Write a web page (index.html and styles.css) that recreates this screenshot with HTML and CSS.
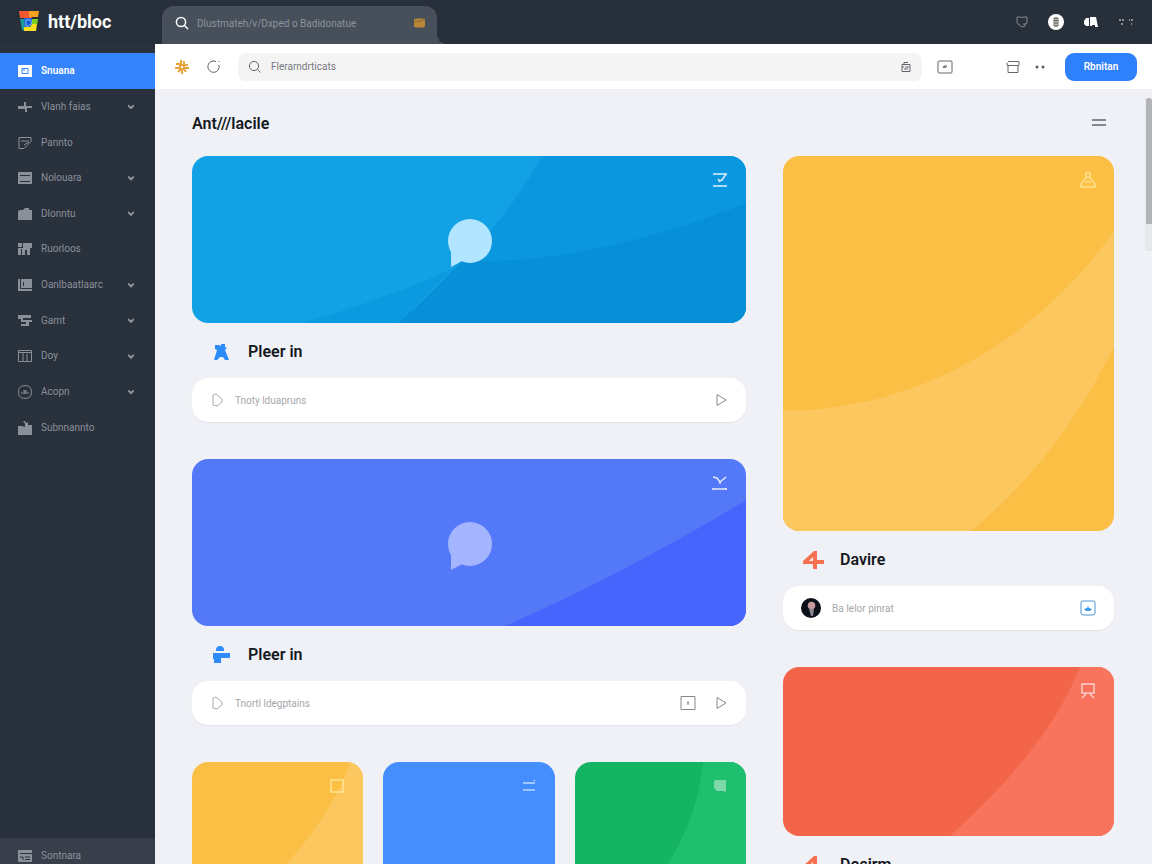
FILE: index.html
```html
<!DOCTYPE html>
<html lang="en">
<head>
<meta charset="utf-8">
<meta name="viewport" content="width=device-width, initial-scale=1">
<title>htt/bloc</title>
<link rel="stylesheet" href="styles.css">
</head>
<body>
<div class="app">
  <header class="topbar">
    <a class="brand" href="#">
      <svg class="logo" viewBox="0 0 22 22" aria-hidden="true">
        <path d="M1 1h13v7H2z" fill="#f4582e"/><path d="M11 1h10l-1 6h-9z" fill="#f9a01f"/>
        <path d="M2 9h5v12l-3-1z" fill="#1c9a93"/><path d="M6 8h8v8l-7 5z" fill="#1f62d8"/>
        <path d="M14 9h6l-1 6h-5z" fill="#7ed321"/><path d="M6 17h6l2-3h5l-1 7H6z" fill="#fbe11d"/>
        <path d="M8 10h4l2 3-4 3H8z" fill="#1557c9" stroke="#7fb9ff"/>
      </svg>
      <span>htt/bloc</span>
    </a>
    <label class="tab">
      <svg class="i14" viewBox="0 0 14 14" aria-hidden="true"><circle cx="6" cy="6" r="4.6"/><path d="M9.5 9.5l3.5 3.5"/></svg>
      <input type="search" aria-label="Search everything" placeholder="Dlustmateh/v/Dxped o Badidonatue">
      <svg class="folder" viewBox="0 0 12 10" aria-hidden="true"><rect width="12" height="10" rx="2" fill="#b98735"/><path d="M1 3h7l1-1.500h2" stroke="#7a6238" fill="none"/></svg>
    </label>
    <div class="top-actions">
      <button aria-label="Protection"><svg class="i14 dim" viewBox="0 0 14 14"><path d="M2 2h4l1 1 1-1h4v6l-2 1v2l-3 1-4-3L2 7zM8 9h2"/></svg></button>
      <button class="coin" aria-label="Account"><svg viewBox="0 0 16 16"><path d="M6 4h4v8H6zM6 6.500h4M6 9h4M8 3v10"/></svg></button>
      <button aria-label="Library"><svg class="solid" viewBox="0 0 16 14"><path d="M3 3h3v8H3L1 9V6zM7 2h6l2 10h-3v-2H9v1H7z"/></svg></button>
      <button aria-label="More"><svg class="dots-sq" viewBox="0 0 16 12"><path d="M1 4h2M4 4h2M11 4h1M13 4h2M3 8h2M13 8h1"/></svg></button>
    </div>
  </header>

  <aside class="sidebar">
    <nav class="menu" aria-label="Main">
      <a class="item active" href="#"><svg viewBox="0 0 14 14"><path class="f" d="M0 1h14v12H0z"/><path d="M4 4.500h6v5H4zM6 7V5" stroke="#3584fb"/></svg><span>Snuana</span></a>
      <a class="item" href="#"><svg viewBox="0 0 14 14"><path class="f" d="M0 6h6V2h2v4h6v2H9v4H7V9H0z"/></svg><span>Vlanh faias</span><i class="chev"></i></a>
      <a class="item" href="#"><svg viewBox="0 0 14 14"><path d="M1 1.500h12v4l-7 7H1zM3 5h8M6 9l5-3"/></svg><span>Pannto</span></a>
      <a class="item" href="#"><svg viewBox="0 0 14 14"><path class="f" d="M0 1h14v12H0z"/><path class="cut" d="M2 4.500h10M2 10.500h10"/></svg><span>Nolouara</span><i class="chev"></i></a>
      <a class="item" href="#"><svg viewBox="0 0 14 14"><path class="f" d="M0 4l2-1h3l2-2h4v2h3v10H0z"/></svg><span>Dlonntu</span><i class="chev"></i></a>
      <a class="item" href="#"><svg viewBox="0 0 14 14"><path class="f" d="M0 1h14v5h-2v7H9V8H7v5H4V7H3v6H0z"/><path class="cut" d="M4.500 1v5M0 5.500h4"/></svg><span>Ruorloos</span></a>
      <a class="item" href="#"><svg viewBox="0 0 14 14"><path class="f" d="M0 1h14v12H0z"/><path class="cut" d="M2.500 1v9.500H14M5.500 4v4"/></svg><span>Oanlbaatlaarc</span><i class="chev"></i></a>
      <a class="item" href="#"><svg viewBox="0 0 14 14"><path class="f" d="M0 1h13v3H5v2h9v2h-3v4H3v-2h5V8H3V5H0z"/></svg><span>Gamt</span><i class="chev"></i></a>
      <a class="item" href="#"><svg viewBox="0 0 14 14"><path d="M.5 1.500h13v11H.5zM.5 3.500h13M5 3v9M9 5v7"/></svg><span>Doy</span><i class="chev"></i></a>
      <a class="item" href="#"><svg viewBox="0 0 14 14"><rect x=".7" y=".7" width="12.600" height="12.600" rx="5"/><path d="M3 8h8M5 6h4M7 5v4"/></svg><span>Acopn</span><i class="chev"></i></a>
      <a class="item" href="#"><svg viewBox="0 0 14 14"><path class="f" d="M0 5h4l3 1V3L5 0h2l1 2 2-1v3h4v10H0z"/></svg><span>Subnnannto</span></a>
    </nav>
    <a class="item settings" href="#"><svg viewBox="0 0 14 14"><path class="f" d="M0 1h14v12H0z"/><path class="cut" d="M2 4.500h12M2 8h3v3M7 8h5M7 10.500h5"/></svg><span>Sontnara</span></a>
  </aside>

  <div class="main">
    <div class="toolbar">
      <button aria-label="Apps"><svg class="i16 flower" viewBox="0 0 16 16"><path d="M7 1v5M10 2v4M2 5h4M10 6h4M1 9h5M10 9h5M4 13l3-3M8 9v6M12 13l-2-3M6 6h4v4H6z"/></svg></button>
      <button aria-label="Reload"><svg class="i16 line" viewBox="0 0 16 16"><path d="M10 2.500A5.700 5.700 0 1 0 13 6M6 2.500l1-1M13 2v1"/></svg></button>
      <label class="search">
        <svg class="i14 line" viewBox="0 0 14 14" aria-hidden="true"><circle cx="6" cy="6" r="4.600"/><path d="M9.500 9.500l3 3"/></svg>
        <input type="search" aria-label="Search" placeholder="Flerarndrticats">
        <svg class="i12 line" viewBox="0 0 12 12" aria-hidden="true"><path d="M2 3.500h8v7H2zM4 3V1.500h4M2 6h2M5 6h4M4 8h4"/></svg>
      </label>
      <button aria-label="Panel"><svg class="i16 line" viewBox="0 0 16 16"><rect x="1" y="2" width="14" height="12" rx="1"/><path d="M6 9l1-2 1 2 2-2M7 7h3"/></svg></button>
      <button class="push" aria-label="Archive"><svg class="i16 line" viewBox="0 0 16 16"><path d="M3 6.500h10v7H3zM2 6V3.500M3 2.500h11V6M2 6.500h12"/></svg></button>
      <button aria-label="More options"><svg class="i16 two" viewBox="0 0 16 16"><circle cx="5" cy="8" r="1.500"/><circle cx="11" cy="8" r="1.500"/></svg></button>
      <button class="primary">Rbnitan</button>
    </div>

    <main class="content">
      <div class="heading">
        <h1>Ant///lacile</h1>
        <button aria-label="Menu"><svg class="i16 bars" viewBox="0 0 16 16"><path d="M1 4h14M1 9h14"/></svg></button>
      </div>
      <div class="board">
        <div class="col">
          <article class="block">
            <div class="hero sky">
              <svg class="art" viewBox="0 0 554 166" preserveAspectRatio="none"><path d="M350 0C320 55 280 100 206 166H554V0z" fill="#0b97e0"/><path d="M110 166Q200 140 262 111L206 166z" fill="#0b9ae0"/><path d="M206 166Q240 137 270 104C350 108 450 88 554 47V166z" fill="#078fd8"/></svg>
              <svg class="bubble" viewBox="0 0 46 50"><circle cx="23" cy="23" r="22"/><path d="M4 33v16l13-7z"/></svg>
              <svg class="mark" viewBox="0 0 16 16"><path d="M1 2h14M1 14h14M14 2l-4 6-3 1M6 7l2 3"/></svg>
            </div>
            <div class="label"><svg viewBox="0 0 18 18"><path d="M3 2h4l2 1V1h4v3l2 1-2 2 4 10h-4l-2-3H8l-3 3H2L5 7 3 6z"/></svg><h2>Pleer in</h2></div>
            <label class="pill"><svg class="i14" viewBox="0 0 14 14"><path d="M3 2l3-1 6 5v3l-5 4-4-1z"/></svg><input placeholder="Tnoty lduapruns" aria-label="Note"><button aria-label="Send"><svg class="i14 dark" viewBox="0 0 14 14"><path d="M3 1.500l9 5.500-9 5.500z"/></svg></button></label>
          </article>
          <article class="block">
            <div class="hero indigo">
              <svg class="art" viewBox="0 0 554 166" preserveAspectRatio="none"><path d="M554 41Q428 116 313 166H554z" fill="#4765fc"/></svg>
              <svg class="bubble" viewBox="0 0 46 50"><circle cx="23" cy="23" r="22"/><path d="M4 33v16l13-7z"/></svg>
              <svg class="mark" viewBox="0 0 16 16"><path d="M1 2l4 1 3 4 6-5M8 7v2M1 14h14M1 13v2M14 13v2"/></svg>
            </div>
            <div class="label"><svg viewBox="0 0 18 18"><path d="M4 4a4 4 0 0 1 8 0v1H4zM1 7h17v5H9v5H2v-4H1z"/></svg><h2>Pleer in</h2></div>
            <label class="pill"><svg class="i14" viewBox="0 0 14 14"><path d="M3 2l3-1 6 5v3l-5 4-4-1z"/></svg><input placeholder="Tnortl ldegptains" aria-label="Note"><button aria-label="Attach"><svg class="i16 dark" viewBox="0 0 16 16"><path d="M1 1.500h14v13H1zM8 6v4M7 8h2"/></svg></button><button aria-label="Send"><svg class="i14 dark" viewBox="0 0 14 14"><path d="M3 1.500l9 5.500-9 5.500z"/></svg></button></label>
          </article>
          <div class="trio">
            <div class="hero amber"><svg class="art" viewBox="0 0 171 166" preserveAspectRatio="none"><path d="M158 0Q144 44 95 101L30 166H171V0z" fill="#fcc75e"/></svg><svg class="mark" viewBox="0 0 16 16"><path d="M2 2h12v12H2z"/></svg></div>
            <div class="hero blue"><svg class="mark" viewBox="0 0 16 16"><path d="M2 5h12M2 12h12M13 3l1-1"/></svg></div>
            <div class="hero green"><svg class="art" viewBox="0 0 171 166" preserveAspectRatio="none"><path d="M128 0Q122 55 93 101T40 166H171V0z" fill="#20bf70"/></svg><svg class="mark fill" viewBox="0 0 16 16"><path d="M3 2h11v12l-3-1H5l-3-3V4z"/></svg></div>
          </div>
        </div>
        <div class="col">
          <article class="block">
            <div class="hero amber tall">
              <svg class="art" viewBox="0 0 331 374" preserveAspectRatio="none"><path d="M0 254C130 254 250 188 331 75V190Q276 302 188 374H0z" fill="#fcc75e"/></svg>
              <svg class="mark" viewBox="0 0 16 16"><path d="M6 1h4v5l5 6v3H1v-3l5-6zM6 5h4M5 11l3-2 3 2"/></svg>
            </div>
            <div class="label coral"><svg class="wide" viewBox="0 0 22 20"><path d="M1 11L12 1h3v9h7v4h-7v5h-4v-5H1zM11 7l-4 4h4z"/></svg><h2>Davire</h2></div>
            <label class="pill"><svg class="avatar" viewBox="0 0 20 20"><circle cx="10" cy="10" r="10" fill="#0b1118"/><circle cx="10.500" cy="7.500" r="3.800" fill="#c49a9e"/><path d="M8 11l2 7h2l1-7z" fill="#8b8990"/></svg><input placeholder="Ba Ielor pinrat" aria-label="Comment"><button aria-label="Save"><svg class="i16 save" viewBox="0 0 16 16"><rect x="1" y="1" width="14" height="14" rx="2"/><path class="f" d="M4 9l3-1 1-2 1 2 3 1-2 2H6z"/></svg></button></label>
          </article>
          <article class="block">
            <div class="hero red">
              <svg class="art" viewBox="0 0 331 168" preserveAspectRatio="none"><path d="M297 0C275 56 230 112 167 168H331V0z" fill="#f8745c"/></svg>
              <svg class="mark" viewBox="0 0 16 16"><path d="M2 1h12v9H2zM6 11l-4 4M10 11l4 4"/></svg>
            </div>
            <div class="label coral"><svg class="wide" viewBox="0 0 22 20"><path d="M1 11L12 1h3v9h7v4h-7v5h-4v-5H1zM11 7l-4 4h4z"/></svg><h2>Dosirm</h2></div>
          </article>
        </div>
      </div>
    </main>
    <div class="track" aria-hidden="true"><div class="thumb"></div></div>
  </div>
</div>
</body>
</html>
```
FILE: styles.css
```css
* { box-sizing: border-box; }
body { margin: 0; font-family: Roboto, "Liberation Sans", sans-serif; font-size: 10px; color: #15181e; background: #f0f1f6; }
button, input { font: inherit; color: inherit; border: 0; padding: 0; background: none; outline: 0; }
button { display: flex; flex: none; cursor: pointer; }
a { color: inherit; text-decoration: none; }
h1, h2 { margin: 0; font-size: 16px; line-height: 20px; font-weight: 600; }
svg { display: block; flex: none; fill: none; stroke: currentColor; }

.app { display: grid; grid-template: 44px minmax(0, 1fr) / 155px minmax(0, 1fr); height: 100vh; overflow: hidden; }
.i12 { width: 12px; height: 12px; }
.i14 { width: 14px; height: 14px; }
.i16 { width: 16px; height: 16px; }

.topbar { grid-column: 1 / -1; display: flex; align-items: stretch; background: #272f3a; color: #fff; }
.brand { display: flex; align-items: center; gap: 8px; width: 162px; padding: 0 0 2px 18px; font-size: 18px; font-weight: 700; }
.logo { width: 22px; height: 22px; stroke: none; }
.tab { position: relative; display: flex; align-items: center; gap: 8px; width: 275px; margin-top: 6px; padding: 0 12px 4px 13px; border-radius: 12px 12px 0 0; background: #474f5a; }
.tab::after { content: ""; position: absolute; left: 100%; bottom: 0; width: 10px; height: 10px; background: radial-gradient(circle at 100% 0, transparent 10px, #474f5a 10px); }
.tab input { flex: 1; min-width: 0; }
.tab input::placeholder { color: #8c939c; opacity: 1; }
.tab .i14 { stroke-width: 1.5; }
.folder { width: 11px; height: 10px; stroke: none; }
.top-actions { display: flex; align-items: center; gap: 19px; margin-left: auto; padding-right: 18px; }
.dim { color: #858b94; }
.coin { width: 16px; height: 16px; border-radius: 50%; background: #fff; color: #62645a; }
.solid { width: 16px; height: 14px; fill: #fff; stroke: none; }
.dots-sq { width: 16px; height: 12px; color: #8a9099; stroke-width: 2; }

.sidebar { display: flex; flex-direction: column; padding-top: 9px; background: #29313c; color: #89909a; }
.menu { display: grid; grid-auto-rows: 1fr; min-height: 392px; }
.item { display: flex; align-items: center; gap: 9px; padding: 1px 20px 0 18px; line-height: 16px; }
.item svg { width: 14px; height: 14px; }
.item .f { fill: currentColor; stroke: none; }
.item .cut { stroke: #29313c; }
.active { background: #3584fb; color: #fff; font-weight: 600; }
.chev { width: 6px; height: 5px; margin-left: auto; margin-right: 1px; background: #8c939c; clip-path: polygon(0 0, 50% 40%, 100% 0, 100% 40%, 50% 100%, 0 40%); }
.settings { margin-top: auto; padding-top: 10px; background: #383f4a; }

.main { position: relative; display: flex; flex-direction: column; min-width: 0; min-height: 0; }
.toolbar { display: flex; flex: none; align-items: center; height: 45px; padding: 0 15px 0 19px; background: #fff; }
.line { color: #62666c; }
.flower { color: #e8a33b; stroke-width: 2; }
.toolbar > button + button { margin-left: 16px; }
.search { display: flex; flex: 1; align-items: center; gap: 9px; height: 28px; margin: 0 15px 0 16px; padding: 0 10px; border-radius: 8px; background: #f4f4f5; }
.search input { flex: 1; min-width: 0; }
.search input::placeholder { color: #777a80; opacity: 1; }
.toolbar > .push { margin-left: 52px; }
.toolbar > .push + button { margin-left: 11px; }
.two { fill: #55585e; stroke: none; }
.toolbar > .primary { align-items: center; justify-content: center; width: 72px; height: 28px; margin-left: 17px; border-radius: 9px; background: #2f80fb; color: #fff; font-weight: 600; }

.content { flex: 1; min-height: 0; overflow: hidden; padding: 25px 38px 0 37px; }
.heading { display: flex; align-items: center; justify-content: space-between; margin-bottom: 22px; }
.heading button { margin-right: 7px; }
.bars { color: #85888e; stroke-width: 2; }
.board { display: grid; grid-template-columns: 554fr 331fr; gap: 37px; }
.col { display: flex; flex-direction: column; gap: 37px; min-width: 0; }
.hero { position: relative; height: 167px; border-radius: 16px; overflow: hidden; }
.tall { height: 375px; }
.sky { background: #12a1e5; }
.indigo { background: #5479f8; }
.amber { background: #fbbf45; }
.blue { background: #448efe; }
.green { background: #15b463; }
.red { height: 169px; background: #f36549; }
.art { position: absolute; inset: 0; width: 100%; height: 100%; stroke: none; }
.bubble { position: absolute; left: 50%; top: 50%; width: 46px; height: 50px; margin: -22px 0 0 -22px; stroke: none; fill: #b2e5ff; }
.indigo .bubble { fill: #a4b5fe; }
.mark { position: absolute; top: 16px; right: 18px; width: 16px; height: 16px; color: #fff; stroke-width: 1.5; opacity: .85; }
.amber .mark { color: #ffeaa0; }
.blue .mark, .red .mark { opacity: .65; }
.fill { fill: #8fddb2; stroke: none; }
.label { display: flex; align-items: center; gap: 18px; height: 55px; padding: 3px 0 0 20px; color: #2c8dfa; }
.label svg { width: 18px; height: 18px; fill: currentColor; stroke: none; }
.label .wide { width: 22px; height: 20px; fill-rule: evenodd; }
.label h2 { color: #15181e; }
.coral { gap: 16px; padding-left: 19px; color: #f7704f; }
.pill { display: flex; align-items: center; gap: 11px; height: 44px; padding: 0 18px; border-radius: 16px; background: #fff; box-shadow: 0 1px 1px #e2e4ea; color: #a9acb1; }
.pill input { flex: 1; min-width: 0; }
.pill input::placeholder { color: #a5a8ad; opacity: 1; }
.pill button + button { margin-left: 7px; }
.dark { color: #85888d; }
.avatar { width: 20px; height: 20px; stroke: none; }
.save { color: #4d93d6; }
.save .f { fill: #379aee; stroke: none; }
.trio { display: grid; grid-template-columns: repeat(3, minmax(0, 1fr)); gap: 20px; }

.track { position: absolute; top: 54px; right: 0; width: 7px; height: 153px; background: #e6e7ea; }
.thumb { width: 6px; height: 126px; margin-left: auto; border-radius: 3px 3px 0 0; background: #b2b3b7; }
```
